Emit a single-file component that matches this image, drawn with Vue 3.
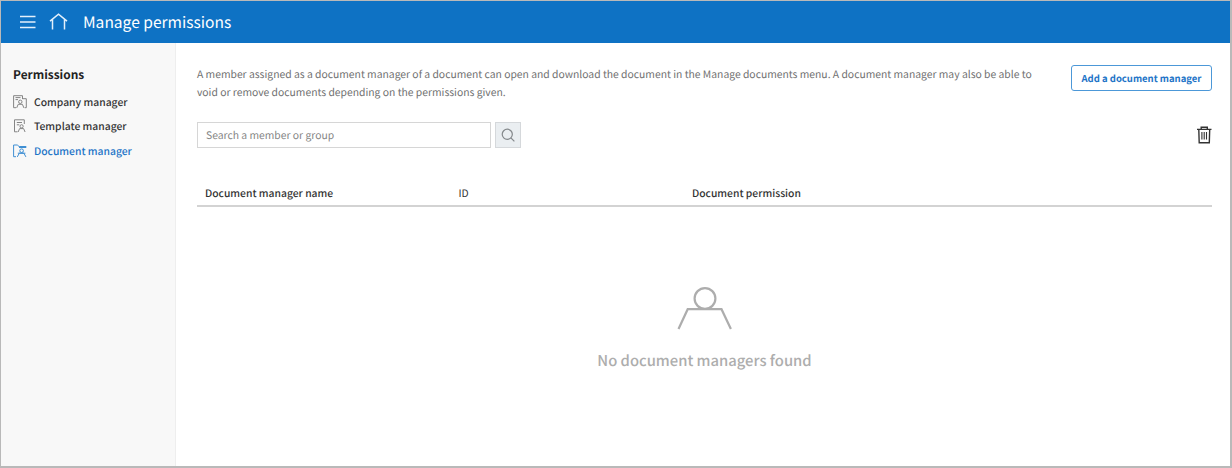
<script setup>
const items = [
  { id: 'company', label: 'Company manager' },
  { id: 'template', label: 'Template manager' },
  { id: 'document', label: 'Document manager', active: true },
]
</script>

<template>
  <div class="window">
    <header class="topbar">
      <svg class="menu" viewBox="0 0 16 14"><path d="M0 1.5H15.5M0 7H15.5M0 12.5H15.5" /></svg>
      <svg class="home" viewBox="0 0 20 18"><path d="M1 8.2L9.5 1.2L18 8.2M3.5 6.5V16.5M15.5 6.5V16.5" /></svg>
      <h1><span>Manage permissions</span></h1>
    </header>
    <div class="body">
      <nav class="sidebar">
        <h2><span>Permissions</span></h2>
        <a v-for="item in items" :key="item.id" :class="['item', { active: item.active }]">
          <svg viewBox="0 0 14 14">
            <g v-if="item.id === 'company'">
              <path d="M3 12.7H.6V.7H9.5V4M9.5 3.7H13.3V12.7H11.7M2.5 2.6H7.5M2.5 4.6H5" />
              <circle cx="7.3" cy="6.8" r="1.7" /><path d="M3.7 12.9L5.2 9.3H9.4L10.9 12.9" />
            </g>
            <g v-else-if="item.id === 'template'">
              <path d="M4.5 12.8H1.5V.8H11.3V5M3.8 3.5H9M3.8 5.8H6.3" />
              <circle cx="8.6" cy="7.3" r="1.6" /><path d="M5.1 13L6.6 9.6H10.6L12.1 13" />
            </g>
            <g v-else>
              <path d="M3 12.7H.6V1H4.3L6.1 2.5H13.3M6 3.5H13.3" />
              <circle cx="8.6" cy="6.7" r="1.8" /><path d="M4.3 12.9L6.3 9.2H10.9L12.9 12.9M4.8 9.2H12.4" />
            </g>
          </svg>
          <span>{{ item.label }}</span>
        </a>
      </nav>
      <main>
        <section class="intro">
          <p>
            <span class="line one">A member assigned as a document manager of a document can open and download the document in the Manage documents menu. A document manager may also be able to</span>
            <span class="line two">void or remove documents depending on the permissions given.</span>
          </p>
          <button class="add"><span>Add a document manager</span></button>
        </section>
        <section class="tools">
          <div class="input"><span>Search a member or group</span></div>
          <button class="search">
            <svg viewBox="0 0 16 16"><circle cx="6.7" cy="6.7" r="5.4" /><path d="M10.5 10.5L14.3 14.3" /></svg>
          </button>
          <svg class="trash" viewBox="0 0 16 18">
            <path d="M5.2 3V1.3H11.3V3M1 3.4H15.5M2.8 3.5L3.2 16.7H13.3L13.7 3.5" />
            <path class="bars" d="M5.9 6V13.5M8.2 6V13.5M10.5 6V13.5" />
          </svg>
        </section>
        <div class="thead">
          <span class="name">Document manager name</span>
          <span class="id">ID</span>
          <span class="perm">Document permission</span>
        </div>
        <div class="empty">
          <svg viewBox="0 0 56 44"><circle cx="28" cy="11.5" r="10.4" /><path d="M1.5 42L10.7 22.2H44.5L53.9 42" /></svg>
          <p><span>No document managers found</span></p>
        </div>
      </main>
    </div>
  </div>
</template>

<style>
body { overflow: hidden; }
</style>

<style scoped>
* { box-sizing: border-box; margin: 0; }
.window {
  width: 1232px; height: 468px; display: flex; flex-direction: column;
  border: 1px solid #b9b9b9; border-right-width: 2px; border-bottom-width: 2px;
  background: #fff; font-family: "Noto Sans CJK KR", "Noto Sans", sans-serif; font-size: 10.35px; color: #333;
  text-rendering: geometricPrecision;
}
svg { display: block; fill: none; flex: none; }
span { white-space: nowrap; }
.topbar { height: 42px; flex: none; background: #0e72c4; display: flex; align-items: center; padding-left: 19px; }
.topbar svg { stroke: #e3f0fb; stroke-width: 1.5; }
.menu { width: 16px; height: 14px; }
.home { width: 20px; height: 18px; margin-left: 13px; }
h1 { margin-left: 14px; font-size: 15.55px; font-weight: 400; line-height: 24px; color: #fff; }
.body { flex: 1; display: flex; }
.sidebar { width: 175px; flex: none; background: #f8f8f8; border-right: 1px solid #eee; padding: 23px 0 0 12px; }
h2 { font-size: 11.9px; line-height: 18px; font-weight: 700; color: #222; margin-bottom: 6px; }
.item { display: flex; align-items: center; height: 24.3px; gap: 7px; font-weight: 500; color: #333; }
.item span { margin-top: -1px; }
.item svg { width: 14px; height: 14px; stroke: #858585; stroke-width: 1; }
.active { color: #1d74c7; }
.item.active svg { stroke: #3f8fd3; }
main { flex: 1; min-width: 0; padding: 22px 18px 0 21px; }
.intro { display: flex; justify-content: space-between; height: 57px; }
.intro p { color: #707070; line-height: 18px; }
.line { display: block; }
.add { width: 141px; height: 26px; flex: none; border: 1px solid #4c98d8; border-radius: 3px; background: #fff; color: #1d74c7; font: 700 9.5px "Noto Sans CJK KR", sans-serif; padding: 0 0 1px; text-rendering: geometricPrecision; }
.tools { display: flex; align-items: center; height: 26px; }
.input { width: 294px; height: 26px; border: 1px solid #d6d6d6; padding-left: 8px; line-height: 24px; color: #858585; }
.search { width: 26px; height: 26px; margin-left: 4px; border: 1px solid #d5d8db; background: #eaeef1; padding: 0 0 0 5px; }
.search svg { width: 15px; height: 15px; stroke: #85898c; stroke-width: 1.3; }
.trash { width: 16px; height: 18px; margin-left: auto; stroke: #333; stroke-width: 1.4; }
.trash .bars { stroke-width: 1.1; }
.thead { display: grid; grid-template-columns: 253.5px 233.5px 1fr; align-items: center; height: 29px; margin-top: 30px; padding: 2px 0 0 8px; border-bottom: 2px solid #d3d3d3; font-weight: 500; }
.id { font-weight: 400; }
.empty { display: flex; flex-direction: column; align-items: center; padding-top: 80px; }
.empty svg { width: 56px; height: 44px; stroke: #adadad; stroke-width: 2.2; }
.empty p { margin-top: 18px; font-size: 14.8px; line-height: 24px; font-weight: 500; color: #adadad; }
</style>
